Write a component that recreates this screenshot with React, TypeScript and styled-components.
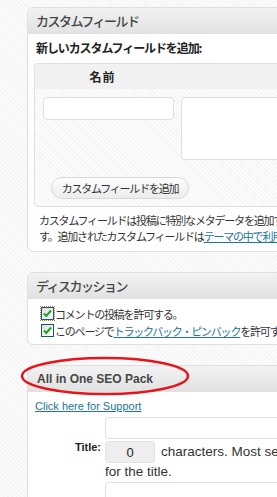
import React from 'react'
import styled, { createGlobalStyle } from 'styled-components'

const GlobalStyle = createGlobalStyle`
  html, body {
    margin: 0;
    padding: 0;
    overflow: hidden;
  }
  body {
    background-color: #f9f9f9;
    background-image: repeating-linear-gradient(45deg, #fbfbfb 0px, #fbfbfb 2px, #f4f4f4 2px, #f4f4f4 3px);
    font-family: "Noto Sans CJK JP", "Liberation Sans", sans-serif;
    color: #333;
  }
`

const jp = `"Noto Sans CJK JP", "Liberation Sans", sans-serif`
const en = `"Liberation Sans", Arial, sans-serif`

const Page = styled.div`
  padding: 7px 0 0 27px;
  display: flex;
  flex-direction: column;
  gap: 20px;
  width: 340px;
`

const Section = styled.div`
  position: relative;
`

const Panel = styled.div`
  width: 330px;
  border: 1px solid #dfdfdf;
  border-radius: 6px;
  background: #fff;
  overflow: hidden;
`

const Header = styled.h3<{ $latin?: boolean }>`
  margin: 0;
  height: 26px;
  line-height: 26px;
  padding-left: ${p => (p.$latin ? 9 : 8)}px;
  background: linear-gradient(#f2f2f2, #e1e1e1);
  font-family: ${p => (p.$latin ? en : jp)};
  font-size: ${p => (p.$latin ? 12 : 13)}px;
  font-weight: ${p => (p.$latin ? 700 : 500)};
  letter-spacing: ${p => (p.$latin ? 0 : -1.5)}px;
  color: #464646;
  white-space: nowrap;
`

const Body = styled.div<{ $pad: string }>`
  padding: ${p => p.$pad};
  white-space: nowrap;
`

const SubHead = styled.p`
  margin: 0 0 8px 8px;
  font-family: ${jp};
  font-size: 12px;
  font-weight: 700;
  line-height: 14px;
  letter-spacing: -1.1px;
  color: #222;
`

const Table = styled.div`
  margin-left: 6px;
  border: 1px solid #dfdfdf;
  border-radius: 4px;
  overflow: hidden;
  background-color: #f9f9f9;
  background-image: repeating-linear-gradient(45deg, #fcfcfc 0px, #fcfcfc 2px, #f4f4f4 2px, #f4f4f4 3px);
`

const TableHead = styled.div`
  height: 25px;
  line-height: 25px;
  background: #f1f1f1;
  display: grid;
  grid-template-columns: 135px 1fr;
`

const Th = styled.div`
  text-align: center;
  font-family: ${jp};
  font-size: 12px;
  font-weight: 700;
  color: #222;
  letter-spacing: 1px;
`

const TableBody = styled.div`
  padding: 8px 0 7px 8px;
`

const FieldRow = styled.div`
  display: flex;
  align-items: flex-start;
  gap: 7px;
`

const TextBox = styled.div<{ $w: number; $h: number }>`
  width: ${p => p.$w}px;
  height: ${p => p.$h}px;
  box-sizing: border-box;
  border: 1px solid #dfdfdf;
  border-radius: 4px;
  background: #fff;
  flex-shrink: 0;
`

const Button = styled.button`
  margin: 17px 0 0 8px;
  width: 138px;
  height: 22px;
  border: 1px solid #d9d9d9;
  border-radius: 11px;
  background: linear-gradient(#fdfdfd, #ececec);
  font-family: ${jp};
  font-size: 11px;
  letter-spacing: -1.2px;
  color: #333;
  padding: 0;
  cursor: pointer;
`

const Note = styled.p`
  margin: 5px 0 0 11px;
  font-family: ${jp};
  font-size: 11px;
  line-height: 16px;
  letter-spacing: -1.2px;
  color: #333;
`

const Link = styled.a<{ $latin?: boolean }>`
  color: #21759b;
  text-decoration: underline;
  font-family: ${p => (p.$latin ? en : 'inherit')};
`

const CheckRow = styled.label`
  display: flex;
  align-items: center;
  height: 17px;
  font-family: ${jp};
  font-size: 11px;
  letter-spacing: -1.2px;
  color: #333;
`

const Box = styled.span<{ $focus?: boolean }>`
  width: 13px;
  height: 13px;
  box-sizing: border-box;
  border: 1px solid #1c5180;
  background: linear-gradient(135deg, #dcdcd7, #ffffff);
  margin-right: 1px;
  display: flex;
  align-items: center;
  justify-content: center;
  outline: ${p => (p.$focus ? '1px dotted #c07a30' : 'none')};
  flex-shrink: 0;
`

const SupportLine = styled.div`
  margin: 6px 0 0 7px;
  font-size: 11px;
  line-height: 14px;
`

const Form = styled.div`
  display: grid;
  grid-template-columns: 73px 1fr;
  column-gap: 4px;
  margin-top: 4px;
`

const Label = styled.div`
  grid-column: 1;
  text-align: right;
  font-family: ${en};
  font-size: 11px;
  font-weight: 700;
  color: #222;
  padding-top: 1px;
  line-height: 14px;
`

const Cell = styled.div`
  grid-column: 2;
`

const Desc = styled.div`
  margin-top: 2px;
  font-family: ${en};
  font-size: 13.5px;
  line-height: 18px;
  color: #333;
`

const Counter = styled.span`
  display: inline-block;
  vertical-align: middle;
  width: 50px;
  height: 22px;
  line-height: 22px;
  box-sizing: border-box;
  text-align: center;
  background: #eeeeee;
  border: 1px solid #e2e2e2;
  border-radius: 4px;
  margin-right: 6px;
  font-size: 13px;
  color: #222;
`

const Ellipse = styled.svg`
  position: absolute;
  left: -8px;
  top: -9px;
  pointer-events: none;
`

const Check = () => (
  <svg width="9" height="9" viewBox="0 0 9 9">
    <path d="M1 4.5 L3.3 7 L8 1.5" fill="none" stroke="#21a121" strokeWidth="2" />
  </svg>
)

export default function App() {
  return (
    <>
      <GlobalStyle />
      <Page>
        <Panel>
          <Header>カスタムフィールド</Header>
          <Body $pad="7px 0 7px 0">
            <SubHead>新しいカスタムフィールドを追加:</SubHead>
            <Table>
              <TableHead>
                <Th>名前</Th>
                <Th />
              </TableHead>
              <TableBody>
                <FieldRow>
                  <TextBox $w={131} $h={23} />
                  <TextBox $w={200} $h={63} />
                </FieldRow>
                <Button>カスタムフィールドを追加</Button>
              </TableBody>
            </Table>
            <Note>
              カスタムフィールドは投稿に特別なメタデータを追加するために使用できま
              <br />
              す。追加されたカスタムフィールドは<Link>テーマの中で利用できます。</Link>
            </Note>
          </Body>
        </Panel>

        <Panel>
          <Header>ディスカッション</Header>
          <Body $pad="6px 0 5px 13px">
            <CheckRow>
              <Box $focus>
                <Check />
              </Box>
              コメントの投稿を許可する。
            </CheckRow>
            <CheckRow>
              <Box>
                <Check />
              </Box>
              このページで<Link>トラックバック・ピンバック</Link>を許可する。
            </CheckRow>
          </Body>
        </Panel>

        <Section>
          <Panel>
            <Header $latin>All in One SEO Pack</Header>
            <Body $pad="0 0 20px 0">
              <SupportLine>
                <Link $latin>Click here for Support</Link>
              </SupportLine>
              <Form>
                <Cell>
                  <TextBox $w={240} $h={22} />
                </Cell>
                <Label>Title:</Label>
                <Cell>
                  <Desc>
                    <Counter>0</Counter>characters. Most search engines use a maximum of 60 chars
                    <br />
                    for the title.
                  </Desc>
                  <TextBox $w={240} $h={40} style={{ marginTop: 1 }} />
                </Cell>
              </Form>
            </Body>
          </Panel>
          <Ellipse width="172" height="40" viewBox="0 0 172 40">
            <ellipse cx="86" cy="20" rx="83" ry="18" fill="none" stroke="#e8141b" strokeWidth="2.5" />
          </Ellipse>
        </Section>
      </Page>
    </>
  )
}
